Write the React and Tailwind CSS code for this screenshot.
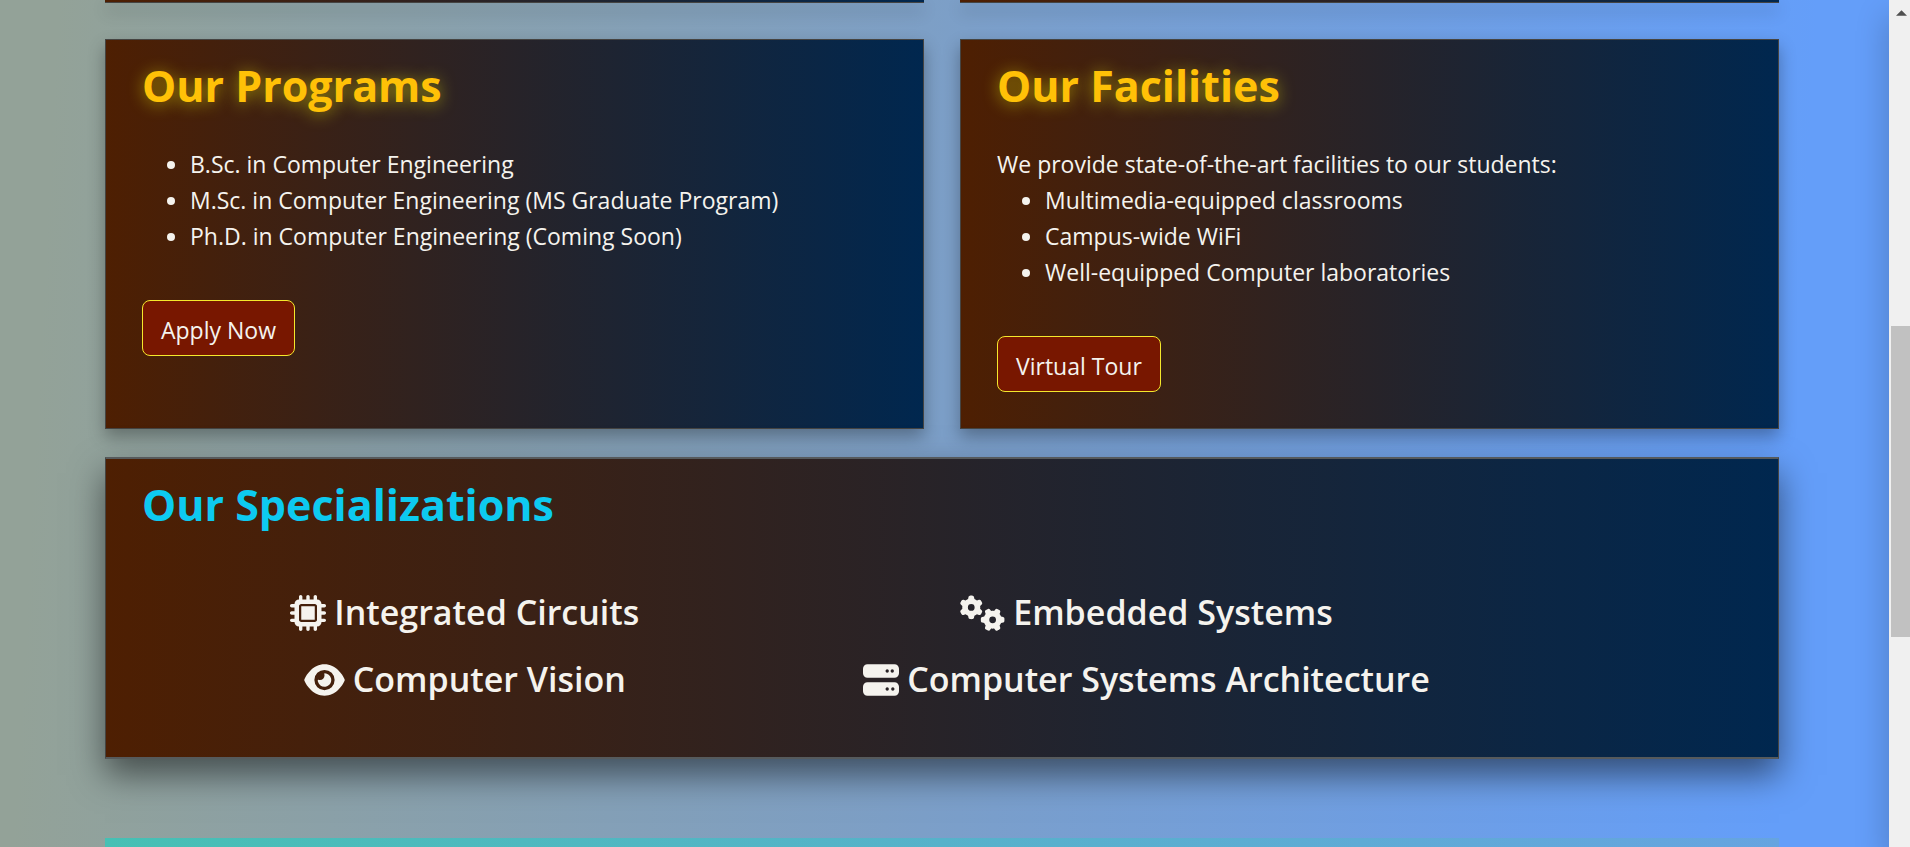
import { FaEye, FaGears, FaMicrochip, FaServer } from "react-icons/fa6";

const surface = "bg-[linear-gradient(90deg,#4e1f02,#00274f)]";
const shadowSmall = "shadow-[0_8px_16px_rgba(0,0,0,0.3)]";
const shadowLarge = "shadow-[0_16px_32px_rgba(0,0,0,0.5)]";

function Card({ title, action, children }) {
  return (
    <section className={`border border-[#454442] px-9 pt-5 pb-9 ${surface} ${shadowSmall}`}>
      <h2 className="mb-[34px] text-[43px] leading-[52px] font-bold text-[#ffc107] [text-shadow:0px_2px_16px_rgba(255,255,0,0.5)]">
        {title}
      </h2>
      <div className="text-[23px] leading-9">{children}</div>
      <button
        type="button"
        className="mt-[46px] h-14 rounded-lg border border-[#f5e82c] bg-[#781700] px-[18px] pt-1 text-[23px] leading-9"
      >
        {action}
      </button>
    </section>
  );
}

function Specialization({ icon, children }) {
  return (
    <h3 className="flex items-center justify-center gap-2 text-[34px] leading-[43px] font-semibold">
      {icon}
      {children}
    </h3>
  );
}

export default function App() {
  return (
    <div className="flex h-screen overflow-hidden bg-[#f0f0f0] font-['Open_Sans','Noto_Sans',sans-serif] text-[#f5f3ee]">
      <main className="flex min-w-0 flex-1 flex-col overflow-hidden bg-[linear-gradient(93deg,#93a298_0%,#93a298_3%,#7c9fc8_50%,#649ef9_94%,#649ef9_100%)] pr-[110px] pl-[105px]">
        <div className="grid shrink-0 grid-cols-2 gap-9">
          <div className={`h-[3px] border-b border-[#454442] ${surface} ${shadowSmall}`} />
          <div className={`h-[3px] border-b border-[#454442] ${surface} ${shadowSmall}`} />
        </div>

        <div className="mt-9 grid shrink-0 grid-cols-2 gap-9">
          <Card title="Our Programs" action="Apply Now">
            <ul className="list-disc pl-12">
              <li>B.Sc. in Computer Engineering</li>
              <li>M.Sc. in Computer Engineering (MS Graduate Program)</li>
              <li>Ph.D. in Computer Engineering (Coming Soon)</li>
            </ul>
          </Card>
          <Card title="Our Facilities" action="Virtual Tour">
            <p>We provide state-of-the-art facilities to our students:</p>
            <ul className="list-disc pl-12">
              <li>Multimedia-equipped classrooms</li>
              <li>Campus-wide WiFi</li>
              <li>Well-equipped Computer laboratories</li>
            </ul>
          </Card>
        </div>

        <section
          className={`mt-7 shrink-0 border-x border-y-2 border-x-[#454442] border-y-[#565a5c] px-9 pt-5 pb-14 ${surface} ${shadowLarge}`}
        >
          <h2 className="text-[43px] leading-[52px] font-bold text-[#0dcaf0]">Our Specializations</h2>
          <div className="-mx-[18px] mt-[60px] grid grid-cols-12 gap-y-6">
            <div className="col-span-5">
              <Specialization icon={<FaMicrochip className="size-9" />}>Integrated Circuits</Specialization>
            </div>
            <div className="col-span-5">
              <Specialization icon={<FaGears className="h-9 w-[45px]" />}>Embedded Systems</Specialization>
            </div>
            <div className="col-span-5 col-start-1">
              <Specialization icon={<FaEye className="h-9 w-[41px]" />}>Computer Vision</Specialization>
            </div>
            <div className="col-span-5">
              <Specialization icon={<FaServer className="size-9" />}>Computer Systems Architecture</Specialization>
            </div>
          </div>
        </section>

        <div className="mt-[79px] min-h-2 flex-1 bg-[linear-gradient(90deg,#46c0b4,#66a4e0)]" />
      </main>

      <aside className="flex w-[21px] shrink-0 flex-col items-end bg-[#f0f0f0] shadow-[0_16px_32px_rgba(0,0,0,0.25)]">
        <svg viewBox="0 0 12 6" className="mt-[10px] mr-[3px] h-[6px] w-[11px] fill-[#505050]">
          <path d="M6 0 12 6H0z" />
        </svg>
        <div className="mt-[310px] h-[311px] w-[19px] bg-[#c1c1c1]" />
      </aside>
    </div>
  );
}
